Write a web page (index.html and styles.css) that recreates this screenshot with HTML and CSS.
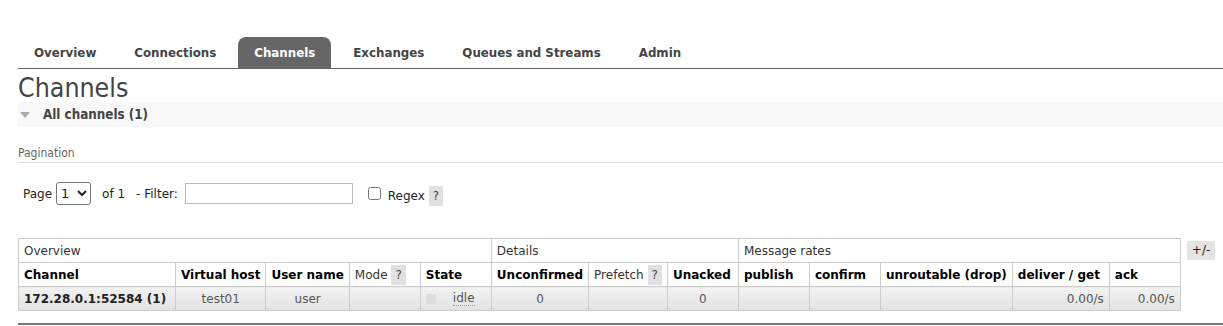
FILE: index.html
```html
<!DOCTYPE html>
<html>
<head>
<meta charset="utf-8">
<link rel="stylesheet" href="styles.css">
</head>
<body>
<div class="page">
  <ul class="tabs">
    <li><a>Overview</a></li>
    <li><a>Connections</a></li>
    <li><a class="selected">Channels</a></li>
    <li><a>Exchanges</a></li>
    <li><a>Queues and Streams</a></li>
    <li><a>Admin</a></li>
  </ul>
  <h1 class="title">Channels</h1>
  <div class="section-head"><span class="tri"></span>All channels (1)</div>
  <div class="pag-title">Pagination</div>
  <div class="filter-row">
    <span>Page</span>
    <select class="sel"><option>1</option></select>
    <span class="of">of 1</span>
    <span class="flabel">- Filter:</span>
    <input class="finput" type="text">
    <input class="chk" type="checkbox">
    <span class="regex">Regex</span>
    <span class="help">?</span>
  </div>
  <div class="table-wrap">
    <table class="list">
      <tr class="group">
        <th colspan="5">Overview</th>
        <th colspan="3">Details</th>
        <th colspan="5">Message rates</th>
      </tr>
      <tr class="heads">
        <th class="wide-name">Channel</th>
        <th>Virtual host</th>
        <th>User name</th>
        <th class="plain">Mode <span class="help">?</span></th>
        <th>State</th>
        <th>Unconfirmed</th>
        <th class="plain">Prefetch <span class="help">?</span></th>
        <th>Unacked</th>
        <th>publish</th>
        <th>confirm</th>
        <th>unroutable (drop)</th>
        <th class="wide-deliver">deliver / get</th>
        <th>ack</th>
      </tr>
      <tr class="row">
        <td class="name">172.28.0.1:52584 (1)</td>
        <td class="c">test01</td>
        <td class="c">user</td>
        <td></td>
        <td><span class="state"><span class="sq"></span><abbr class="idle">idle</abbr></span></td>
        <td class="c">0</td>
        <td></td>
        <td class="c">0</td>
        <td></td>
        <td></td>
        <td></td>
        <td class="r">0.00/s</td>
        <td class="r">0.00/s</td>
      </tr>
    </table>
    <span class="plusminus">+/-</span>
  </div>
  <div class="footer"></div>
</div>
</body>
</html>
```
FILE: styles.css
```css
html, body {
  margin: 0;
  padding: 0;
  background: #fff;
}
body {
  font-family: "DejaVu Sans", Verdana, sans-serif;
  font-size: 12px;
  color: #484848;
}
.page {
  padding: 37px 0 0 18px;
}
.tabs {
  list-style: none;
  margin: 0;
  padding: 0;
  display: flex;
  gap: 6px;
  border-bottom: 1px solid #666;
}
.tabs a {
  display: block;
  padding: 0 16px;
  height: 31px;
  line-height: 31px;
  font-family: "DejaVu Sans Condensed", "DejaVu Sans", sans-serif;
  font-weight: bold;
  font-size: 13.15px;
  color: #444;
}
.tabs a.selected {
  background: #666;
  color: #fff;
  border-radius: 8px 8px 0 0;
}
.title {
  margin: 4px 0 0;
  font-family: "DejaVu Sans Condensed", "DejaVu Sans", sans-serif;
  font-weight: normal;
  font-size: 26.5px;
  line-height: 29px;
  color: #444;
}
.section-head {
  display: flex;
  align-items: center;
  height: 25px;
  background: #f8f8f8;
  font-family: "DejaVu Sans Condensed", "DejaVu Sans", sans-serif;
  font-weight: bold;
  font-size: 13.3px;
  color: #444;
}
.tri {
  width: 0;
  height: 0;
  border-left: 5px solid transparent;
  border-right: 5px solid transparent;
  border-top: 6px solid #aaa;
  margin: 0 13px 0 2px;
}
.pag-title {
  margin-top: 19px;
  padding-bottom: 2px;
  border-bottom: 1px solid #ddd;
  font-family: "DejaVu Sans Condensed", "DejaVu Sans", sans-serif;
  font-size: 12px;
  color: #666;
}
.filter-row {
  display: flex;
  align-items: center;
  margin-top: 19px;
  padding-left: 5px;
  color: #222;
}
.sel {
  margin-left: 4px;
  width: 35px;
  height: 23px;
  font-family: "DejaVu Sans", sans-serif;
  font-size: 13px;
  border: 1px solid #767676;
  border-radius: 3px;
  background: #fff;
  color: #222;
}
.of { margin-left: 11px; }
.flabel { margin-left: 11px; }
.finput {
  margin: 0 0 0 7px;
  width: 162px;
  height: 17px;
  border: 1px solid #bbb;
  padding: 1px 2px;
}
.chk {
  margin: 0 0 0 15px;
  width: 13px;
  height: 13px;
}
.regex {
  margin-left: 7px;
  position: relative;
  top: 2px;
}
.filter-row .help {
  margin-left: 4px;
  position: relative;
  top: 2px;
}
.help {
  display: inline-block;
  background: #e0e0e0;
  color: #444;
  padding: 0 4px;
  line-height: 20px;
  font-weight: normal;
}
.table-wrap {
  display: flex;
  align-items: flex-start;
  margin-top: 33px;
}
.list {
  border-collapse: collapse;
}
.list th, .list td {
  border: 1px solid #ccc;
  padding: 0 5px;
  height: 23px;
  min-width: 60px;
  white-space: nowrap;
}
.list th.wide-name { min-width: 146px; }
.list th.wide-deliver { min-width: 86px; }
.list th {
  text-align: left;
  color: #000;
  background: #fff;
}
.group th {
  font-weight: normal;
  color: #333;
}
.heads th.plain {
  font-weight: normal;
  color: #333;
}
.row td {
  background: linear-gradient(#f2f2f2, #e2e2e2);
  color: #555;
}
.row td.name {
  font-weight: bold;
  color: #222;
}
.c { text-align: center; }
.r { text-align: right; }
.state {
  display: flex;
  align-items: center;
}
.sq {
  display: inline-block;
  width: 10px;
  height: 10px;
  background: #ddd;
  margin-right: 17px;
}
.idle {
  text-decoration: none;
  border-bottom: 1px dotted #999;
}
.plusminus {
  margin: 3px 0 0 6px;
  background: #e4e4e4;
  color: #222;
  padding: 0 5px;
  line-height: 19px;
}
.footer {
  margin-top: 12px;
  border-top: 2px solid #777;
}
```
